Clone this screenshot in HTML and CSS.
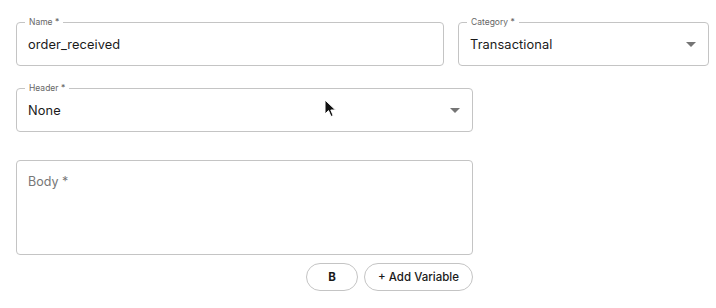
FILE: index.html
```html
<!DOCTYPE html>
<html>
<head>
<meta charset="utf-8">
<link rel="stylesheet" href="styles.css">
</head>
<body>
<div class="form">
  <div class="row">
    <div class="field name">
      <span class="label">Name *</span>
      <span class="value">order_received</span>
    </div>
    <div class="field category">
      <span class="label">Category *</span>
      <span class="value">Transactional</span>
      <span class="arrow"></span>
    </div>
  </div>
  <div class="row">
    <div class="field header">
      <span class="label">Header *</span>
      <span class="value">None</span>
      <span class="arrow"></span>
    </div>
  </div>
  <div class="field body-field">
    <span class="placeholder">Body *</span>
  </div>
  <div class="actions">
    <button class="pill bold">B</button>
    <button class="pill">+ Add Variable</button>
  </div>
  <svg class="cursor" width="13" height="19" viewBox="0 0 13 19">
    <path d="M1 1 L1 15 L4.5 11.6 L7 17.5 L9.2 16.6 L6.8 11 L11.5 11 Z" fill="#111" stroke="#fff" stroke-width="1"/>
  </svg>
</div>
</body>
</html>
```
FILE: styles.css
```css
* { box-sizing: border-box; }
html, body { margin: 0; padding: 0; background: #fff; }
body {
  font-family: Inter, "Open Sans", sans-serif;
  color: #222;
}
.form {
  position: relative;
  width: 693px;
  margin: 22px 0 0 16px;
  display: flex;
  flex-direction: column;
}
.row { display: flex; gap: 14px; }
.field {
  position: relative;
  border: 1px solid #c4c4c4;
  border-radius: 4px;
  height: 44px;
  display: flex;
  align-items: center;
  padding: 0 12px 0 11px;
}
.name { width: 428px; }
.category { width: 251px; }
.header { width: 457px; height: 44px; margin-top: 22px; }
.label {
  position: absolute;
  top: -6px;
  left: 8px;
  padding: 0 4px;
  background: #fff;
  font-size: 8.5px;
  line-height: 10px;
  color: #666;
}
.value { font-size: 12.8px; color: #1a1a1a; letter-spacing: 0.1px; }
.arrow {
  margin-left: auto;
  margin-right: 0;
  width: 0; height: 0;
  border-left: 5px solid transparent;
  border-right: 5px solid transparent;
  border-top: 5px solid #757575;
}
.body-field {
  width: 457px;
  height: 95px;
  margin-top: 28px;
  align-items: flex-start;
  padding-top: 13px;
}
.placeholder { font-size: 12.5px; color: #777; }
.actions {
  width: 457px;
  display: flex;
  justify-content: flex-end;
  gap: 6px;
  margin-top: 8px;
}
.pill {
  height: 28px;
  border: 1px solid #c4c4c4;
  border-radius: 14px;
  background: #fff;
  font-family: Inter, "Open Sans", sans-serif;
  font-size: 11.5px;
  font-weight: 500;
  color: #1a1a1a;
  padding: 0 13px;
}
.pill.bold { width: 52px; font-weight: 700; }
.cursor { position: absolute; left: 308px; top: 77px; }
```
